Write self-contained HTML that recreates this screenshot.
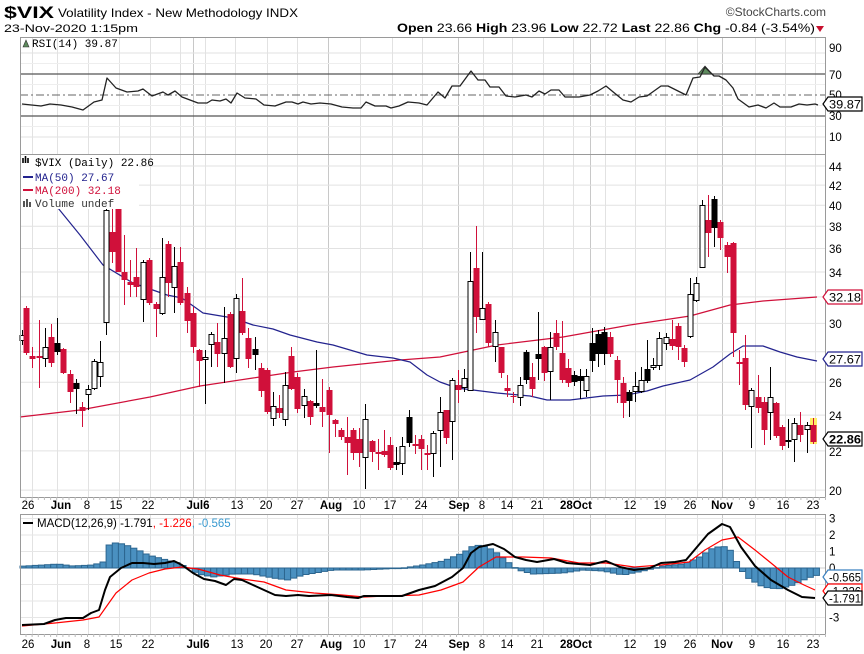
<!DOCTYPE html>
<html><head><meta charset="utf-8"><style>
html,body{margin:0;padding:0;background:#fff;width:864px;height:654px;overflow:hidden}
svg{display:block;font-family:"Liberation Sans",Arial,sans-serif}
</style></head><body>
<svg id="s" width="864" height="654" viewBox="0 0 864 654" xmlns="http://www.w3.org/2000/svg">
<text x="4" y="18" font-size="17" font-weight="bold" textLength="50" lengthAdjust="spacingAndGlyphs">$VIX</text>
<text x="58" y="17" font-size="12" textLength="240" lengthAdjust="spacingAndGlyphs">Volatility Index - New Methodology  INDX</text>
<text x="826" y="16" font-size="12" text-anchor="end" fill="#444">©StockCharts.com</text>
<text x="4" y="32" font-size="11" textLength="134" lengthAdjust="spacingAndGlyphs">23-Nov-2020 1:15pm</text>
<text x="397" y="32" font-size="12" textLength="418" lengthAdjust="spacingAndGlyphs"><tspan font-weight="bold">Open</tspan> 23.66 <tspan font-weight="bold">High</tspan> 23.96 <tspan font-weight="bold">Low</tspan> 22.72 <tspan font-weight="bold">Last</tspan> 22.86 <tspan font-weight="bold">Chg</tspan> -0.84 (-3.54%)</text>
<path d="M816,26 L824,26 L820,32 Z" fill="#c8102e"/>
<g id="g"></g>
</svg>
<script>
var NS="http://www.w3.org/2000/svg",G=document.getElementById("g"),out="";
function L(x1,y1,x2,y2,c,w,extra){out+='<line x1="'+x1+'" y1="'+y1+'" x2="'+x2+'" y2="'+y2+'" stroke="'+c+'" stroke-width="'+(w||1)+'" '+(extra||'')+'/>';}
function R(x,y,w,h,f,s){out+='<rect x="'+x+'" y="'+y+'" width="'+w+'" height="'+h+'" fill="'+f+'"'+(s?' stroke="'+s+'" stroke-width="1"':'')+'/>';}
function T(x,y,t,sz,c,ex){out+='<text x="'+x+'" y="'+y+'" font-size="'+sz+'" fill="'+(c||'#000')+'" '+(ex||'')+'>'+t+'</text>';}
function P(pts,c,w){out+='<polyline fill="none" stroke="'+c+'" stroke-width="'+w+'" stroke-linejoin="round" points="'+pts.map(function(p){return p[0]+','+p[1]}).join(' ')+'"/>';}
var X0=20,X1=826;
var light=[32,57,88,119,150,180,205,235,267,297,360,392,422,483,512,543,573,605,635,665,697,755,785,815];
var dark=[193,328,458,590,722];
var panels=[[37,154],[154,497],[514,634]];
panels.forEach(function(p){
 light.forEach(function(x){L(x+.5,p[0],x+.5,p[1],"#e2e2e2");});
 dark.forEach(function(x){L(x+.5,p[0],x+.5,p[1],"#c8c8c8");});
});
// RSI panel
function ry(r){return 116-(r-30)*1.05;}
[90,10].forEach(function(r){L(X0,ry(r),X1,ry(r),"#e2e2e2");});
[80,60,40,20].forEach(function(r){L(X0,ry(r),X1,ry(r),"#eeeeee");});
// price grid
function py(v){return 166+(Math.log(44)-Math.log(v))*411;}
for(var v=20;v<=44;v+=2){L(X0,py(v).toFixed(1),X1,py(v).toFixed(1),"#e2e2e2");}
// MACD grid
function my(m){return 568-m*16.5;}
[-3,-2,-1,1,2,3].forEach(function(m){L(X0,my(m),X1,my(m),"#e6e6e6");});
L(X0,my(0),X1,my(0),"#cfcfcf");
// RSI
L(X0,ry(70),X1,ry(70),"#555",1.2);L(X0,ry(30),X1,ry(30),"#555",1.2);
L(X0,ry(50),X1,ry(50),"#666",1,'stroke-dasharray="8,3,2,3"');
out+='<path d="M698,74 L705,66 L712,74 Z" fill="#5d8a5d" stroke="#333" stroke-width=".7"/>';
P([[22,104],[41,106],[50,104],[61,105],[72,107],[83,110],[94,102],[102,100],[107,78],[116,88],[127,92],[138,91],[143,89],[152,96],[163,92],[168,95],[175,91],[182,97],[198,103],[207,103],[212,100],[220,101],[226,99],[231,103],[237,93],[245,98],[256,99],[264,105],[275,106],[286,102],[292,102],[298,104],[303,102],[311,104],[320,103],[331,104],[342,107],[353,108],[361,108],[366,102],[375,106],[386,106],[391,108],[399,106],[408,102],[419,103],[427,105],[438,92],[445,98],[452,86],[460,86],[471,71],[478,80],[485,80],[490,87],[499,87],[506,96],[515,97],[526,95],[532,97],[539,91],[545,94],[551,90],[559,90],[565,97],[579,97],[590,95],[598,91],[606,86],[612,91],[623,100],[631,102],[639,97],[647,96],[661,86],[668,86],[678,91],[686,95],[693,78],[700,77],[705,67],[714,76],[719,76],[726,80],[733,88],[738,99],[749,107],[758,105],[766,108],[774,103],[780,107],[791,107],[799,104],[807,105],[815,104],[818,105]],"#222",1.3);
// MAs
P([[20,417],[80,410],[150,397],[200,386],[253,378],[293,372],[333,367],[400,360],[440,357],[497,345],[563,337],[630,325],[690,316],[730,305],[763,301],[817,297]],"#d0103a",1.2);
P([[58,208],[80,235],[103,265],[133,283],[167,295],[182,298],[203,313],[233,318],[253,325],[273,329],[290,335],[317,342],[333,345],[367,355],[393,358],[410,362],[427,375],[440,382],[457,388],[497,393],[530,396],[547,400],[570,400],[603,396],[627,395],[647,391],[663,386],[690,380],[713,367],[730,354],[743,346],[763,346],[780,352],[797,357],[817,361]],"#23238e",1.2);
// candles
R(810,418,7,26,"#ffee66");
var C=[[22,330,345,335,340,'w'],[26,306,355,308,353,'r'],[32,347,368,356,359,'r'],[39,320,388,356,358,'r'],[45,328,367,347,358,'w'],[51,324,367,337,363,'r'],[57,318,355,343,352,'b'],[63,348,374,349,373,'r'],[70,370,403,374,392,'r'],[76,379,414,383,389,'b'],[82,402,427,407,411,'r'],[88,385,410,389,394,'w'],[94,359,390,361,388,'w'],[100,341,387,362,376,'w'],[106,200,335,210,322,'w'],[112,200,263,232,252,'r'],[118,170,272,170,272,'r'],[124,235,305,272,280,'r'],[130,260,297,282,285,'r'],[136,248,297,277,287,'r'],[143,260,322,262,299,'w'],[149,258,305,260,303,'r'],[156,302,337,304,309,'r'],[162,238,315,277,313,'w'],[168,241,297,244,283,'r'],[174,247,313,266,287,'w'],[180,247,305,262,303,'r'],[187,287,333,293,321,'r'],[193,307,353,313,347,'r'],[199,349,387,350,361,'r'],[205,350,404,357,359,'w'],[211,332,367,334,344,'w'],[217,323,367,342,354,'r'],[224,307,383,338,353,'w'],[230,312,368,314,367,'r'],[236,294,373,298,358,'w'],[242,278,335,311,333,'r'],[248,328,368,338,359,'r'],[255,337,370,349,355,'b'],[261,363,397,368,391,'r'],[267,368,414,370,412,'r'],[273,392,426,406,418,'w'],[279,395,418,408,413,'r'],[285,372,426,385,419,'w'],[291,347,390,356,389,'r'],[297,373,413,377,409,'r'],[304,389,418,396,405,'w'],[310,400,425,401,417,'r'],[316,350,408,403,406,'b'],[322,379,427,407,412,'r'],[329,387,453,390,415,'r'],[335,419,437,420,424,'r'],[341,428,440,430,437,'r'],[347,417,475,437,443,'r'],[353,428,460,430,453,'r'],[359,428,467,439,453,'r'],[365,404,489,419,457,'w'],[372,440,462,441,452,'r'],[378,439,470,452,454,'r'],[384,430,457,451,455,'r'],[390,437,470,445,468,'r'],[396,447,470,462,465,'b'],[402,437,475,446,463,'w'],[409,410,447,417,443,'b'],[415,435,454,444,446,'r'],[421,435,470,439,449,'r'],[427,445,470,453,455,'r'],[433,431,477,433,453,'w'],[440,397,467,412,430,'w'],[446,410,444,410,438,'r'],[452,378,460,380,421,'w'],[458,370,403,385,390,'r'],[464,369,392,378,387,'w'],[470,252,391,281,390,'w'],[476,226,333,268,317,'r'],[482,252,320,308,319,'w'],[488,302,347,304,343,'r'],[495,320,362,332,346,'w'],[501,347,378,347,373,'r'],[507,375,397,388,391,'r'],[513,392,403,396,397,'r'],[520,377,406,385,397,'w'],[526,350,384,352,380,'b'],[532,363,397,377,389,'r'],[538,312,380,354,359,'b'],[544,346,381,347,373,'r'],[550,332,400,347,371,'w'],[556,320,350,333,347,'r'],[562,321,383,353,380,'r'],[568,359,387,368,383,'r'],[574,371,386,375,382,'b'],[580,369,399,376,381,'b'],[586,369,397,376,390,'w'],[592,328,372,343,361,'b'],[598,330,367,334,354,'b'],[604,327,365,332,354,'b'],[610,332,357,337,354,'r'],[617,356,403,360,380,'r'],[623,377,418,383,403,'r'],[629,390,417,392,401,'b'],[635,372,402,386,391,'w'],[641,367,393,380,391,'w'],[647,340,383,369,381,'b'],[653,358,370,365,367,'w'],[659,332,370,338,365,'w'],[666,333,350,337,343,'w'],[672,320,350,339,346,'r'],[678,323,360,326,347,'r'],[684,345,367,348,362,'r'],[690,278,338,294,336,'w'],[696,277,302,283,300,'w'],[702,200,267,205,267,'w'],[708,195,257,220,233,'r'],[714,196,247,199,228,'b'],[720,220,250,222,238,'r'],[727,242,273,245,257,'r'],[733,242,357,243,333,'r'],[739,350,385,362,364,'r'],[745,335,410,358,405,'r'],[751,388,448,390,406,'w'],[758,375,413,397,408,'r'],[764,397,445,402,430,'r'],[770,367,440,397,412,'w'],[776,402,438,403,436,'r'],[782,425,450,427,446,'r'],[788,419,448,440,442,'b'],[794,418,462,423,439,'w'],[800,412,442,425,435,'r'],[807,422,453,425,429,'w'],[813,418,444,425,442,'r']];
C.forEach(function(c){var x=c[0],col=c[5]=='r'?'#d0103a':'#000';
 L(x+.5,c[1],x+.5,c[2],col,1);
 var h=Math.max(1,c[4]-c[3]);
 if(c[5]=='w')R(x-2,c[3]+.5,5,h,'#fff','#000');else R(x-2.5,c[3],6,h,col);});
// MACD histogram
var H=[[22,566],[40,565],[55,564],[70,566],[90,565],[100,562],[106,545],[112,543],[120,544],[128,547],[135,550],[145,555],[160,559],[175,563],[185,568],[195,574],[210,577],[230,574],[250,574],[270,578],[285,580],[300,575],[330,570],[360,570],[400,568],[420,565],[440,561],[460,553],[470,546],[478,545],[490,550],[500,558],[515,570],[530,574],[560,573],[580,570],[600,571],[620,575],[640,571],[660,566],[680,564],[695,558],[710,548],[720,546],[730,552],[735,566],[745,578],[760,587],[775,589],[790,585],[805,578],[818,574]];
function interp(x){for(var i=1;i<H.length;i++){if(x<=H[i][0]){var a=H[i-1],b=H[i];return a[1]+(b[1]-a[1])*(x-a[0])/(b[0]-a[0]);}}return H[H.length-1][1];}
for(var x=20;x<818;x+=6.15){var y=interp(x),z=568;R(x.toFixed(1),Math.min(y,z).toFixed(1),6.15,Math.max(.6,Math.abs(y-z)).toFixed(1),'#4a90c0','#2c6690');}
P([[22,626],[55,623],[83,620],[99,617],[116,593],[132,580],[149,573],[165,569],[182,567],[198,569],[220,575],[242,579],[264,582],[286,590],[314,593],[342,595],[364,597],[386,596],[419,595],[441,590],[463,582],[479,567],[496,557],[523,557],[551,558],[579,563],[606,563],[634,567],[661,565],[689,562],[705,550],[722,540],[738,537],[755,550],[771,563],[788,577],[804,585],[815,590]],"#f00",1.2);
P([[22,625],[44,624],[55,620],[66,618],[83,618],[91,613],[99,610],[105,590],[110,577],[121,568],[132,563],[143,563],[154,564],[165,563],[174,561],[182,565],[193,573],[204,579],[215,581],[226,585],[234,579],[242,580],[253,585],[264,590],[275,595],[286,596],[298,595],[309,596],[331,595],[347,597],[358,598],[364,596],[402,596],[419,590],[435,586],[452,577],[463,568],[471,553],[479,547],[493,544],[504,549],[515,557],[526,560],[537,562],[554,559],[567,563],[590,565],[606,561],[620,567],[634,570],[650,568],[661,563],[675,562],[686,560],[697,547],[708,534],[722,524],[730,527],[741,547],[755,566],[771,580],[788,590],[802,597],[815,598]],"#000",2);
// frames
panels.forEach(function(p){out+='<rect x="20.5" y="'+(p[0]+.5)+'" width="805" height="'+(p[1]-p[0])+'" fill="none" stroke="#9a9a9a"/>';});
// ticks under panels
[[497,505],[634,642]].forEach(function(t){for(var x=26;x<826;x+=6.15)L(x.toFixed(1),t[0],x.toFixed(1),t[0]+3,"#bbb");});
// right axis labels
[[90,52],[70,79],[50,99],[30,120],[10,141]].forEach(function(a){T(829,a[1],a[0],11.5);});
[44,42,40,38,36,34,30,26,24,22,20].forEach(function(v){T(829,(py(v)+5).toFixed(0),v,11.5);});
T(829,my(3)+4,3,11.5);T(829,my(2)+4,2,11.5);T(829,my(1)+4,1,11.5);T(829,my(0)+4,0,11.5);T(829,my(-3)+4,-3,11.5);
function tag(y,t,c,b){out+='<path d="M823,'+y+' L828,'+(y-7)+' L862,'+(y-7)+' L862,'+(y+7)+' L828,'+(y+7)+' Z" fill="#fff" stroke="'+c+'" stroke-width="1.2"/>';T(829,y+4.5,t,12,'#000',(b?'font-weight="bold" ':'')+'textLength="32" lengthAdjust="spacingAndGlyphs"');}
tag(104,'39.87','#000');tag(297,'32.18','#d0103a');tag(359,'27.67','#23238e');tag(439,'22.86','#000',1);
tag(577,'-0.565','#3a80c0');tag(591,'-1.226','#f00');tag(598,'-1.791','#000');
// x labels
var XL=[['26',28],['Jun',61,1],['8',87],['15',116],['22',148],['Jul6',198,1],['13',237],['20',266],['27',297],['Aug',331,1],['10',359],['17',390],['24',421],['Sep',459,1],['8',482],['14',507],['21',537],['28Oct',576,1],['12',630],['19',660],['26',690],['Nov',722,1],['9',752],['16',783],['23',813]];
[509,648].forEach(function(y){XL.forEach(function(l){T(l[1],y,l[0],11.5,'#000','text-anchor="middle"'+(l[2]?' font-weight="bold"':''));});});
// legends
T(22,47,'RSI(14) 39.87',11,'#000','font-family="Liberation Mono,monospace" dx="10"');
out+='<path d="M23,47 L26,40 L29,47 Z" fill="#5d8a5d" stroke="#333" stroke-width=".6"/>';
R(21,155,118,54,'#fff');
T(35,166,'$VIX (Daily) 22.86',11,'#000','font-family="Liberation Mono,monospace"');
out+='<path d="M23,163 v-5 M25.5,163 v-7 M28,163 v-5" stroke="#000" stroke-width="1.6"/>';
L(23,177,33,177,'#23238e',2);T(35,181,'MA(50) 27.67',11,'#23238e','font-family="Liberation Mono,monospace"');
L(23,190,33,190,'#d0103a',2);T(35,194,'MA(200) 32.18',11,'#d0103a','font-family="Liberation Mono,monospace"');
out+='<path d="M24,207 v-6 M27,207 v-8 M30,207 v-5" stroke="#555" stroke-width="2"/>';
T(35,207,'Volume undef',11,'#333','font-family="Liberation Mono,monospace"');
L(23,523,33,523,'#000',2);
T(37,527,'MACD(12,26,9) -1.791<tspan fill="#f00">, -1.226</tspan><tspan fill="#3a9ad0">, -0.565</tspan>',11.5,'#000');
G.innerHTML=out;
</script>
</body></html>
